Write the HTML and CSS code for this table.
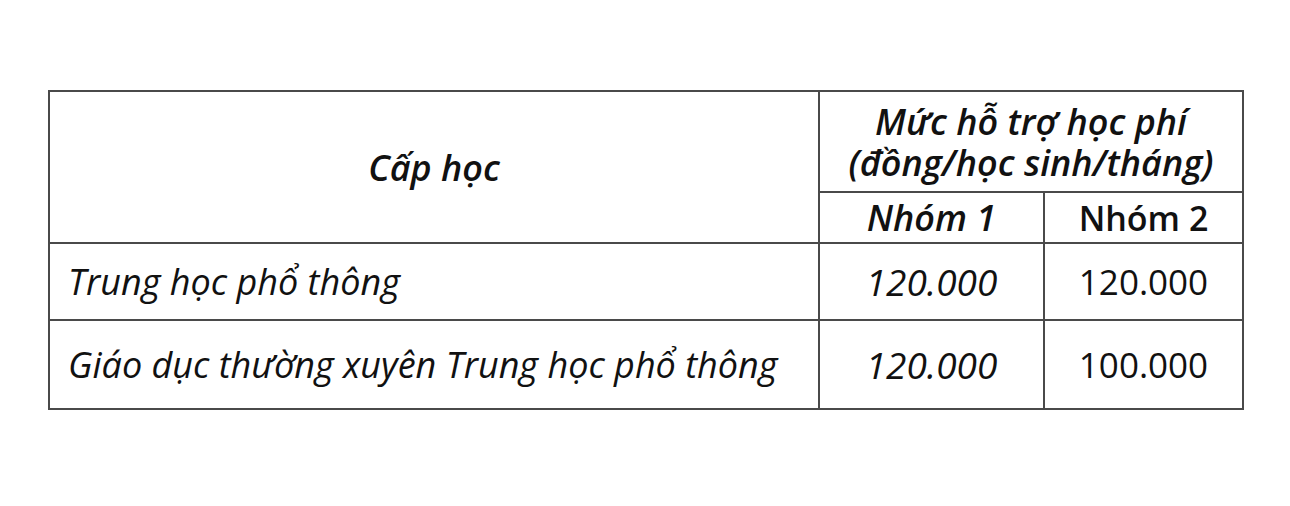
FILE: index.html
```html
<!DOCTYPE html>
<html lang="vi">
<head>
<meta charset="utf-8">
<link rel="stylesheet" href="styles.css">
</head>
<body>
<div class="page">
  <table class="fees">
    <colgroup>
      <col class="c-level">
      <col class="c-g1">
      <col class="c-g2">
    </colgroup>
    <tr class="r-head1">
      <th rowspan="2" class="bi">Cấp học</th>
      <th colspan="2" class="bi two-line"><span class="line">Mức hỗ trợ học phí</span><span class="line">(đồng/học sinh/tháng)</span></th>
    </tr>
    <tr class="r-head2">
      <th class="bi">Nhóm 1</th>
      <th class="b">Nhóm 2</th>
    </tr>
    <tr class="r-1">
      <td class="i left">Trung học phổ thông</td>
      <td class="i num">120.000</td>
      <td class="num-r">120.000</td>
    </tr>
    <tr class="r-2">
      <td class="i left">Giáo dục thường xuyên Trung học phổ thông</td>
      <td class="i num">120.000</td>
      <td class="num-r">100.000</td>
    </tr>
  </table>
</div>
</body>
</html>
```

FILE: styles.css
```css
html, body {
  margin: 0;
  padding: 0;
  background: #ffffff;
}
.page {
  padding: 90px 0 0 48px;
}
.fees {
  border-collapse: collapse;
  width: 1194px;
  table-layout: fixed;
  font-family: "Open Sans", Lato, sans-serif;
  font-size: 36px;
  color: #111111;
}
.c-level { width: 770px; }
.c-g1 { width: 225px; }
.c-g2 { width: 199px; }
.fees th, .fees td {
  border: 2px solid #4a4a4a;
  padding: 0;
  text-align: center;
  vertical-align: middle;
  font-weight: normal;
  font-style: normal;
}
.fees .bi { font-weight: 600; font-style: italic; }
.fees .b { font-weight: 600; font-size: 34px; }
.fees .i { font-style: italic; }
.fees .num { font-size: 37px; }
.fees .num-r { font-size: 35px; }
.fees .left { text-align: left; padding-left: 18px; }
.two-line { padding-top: 6px; }
.line { display: block; line-height: 41px; }
.r-head1 { height: 101px; }
.r-head2 { height: 51px; }
.r-1 { height: 77px; }
.r-2 { height: 89px; }
```
